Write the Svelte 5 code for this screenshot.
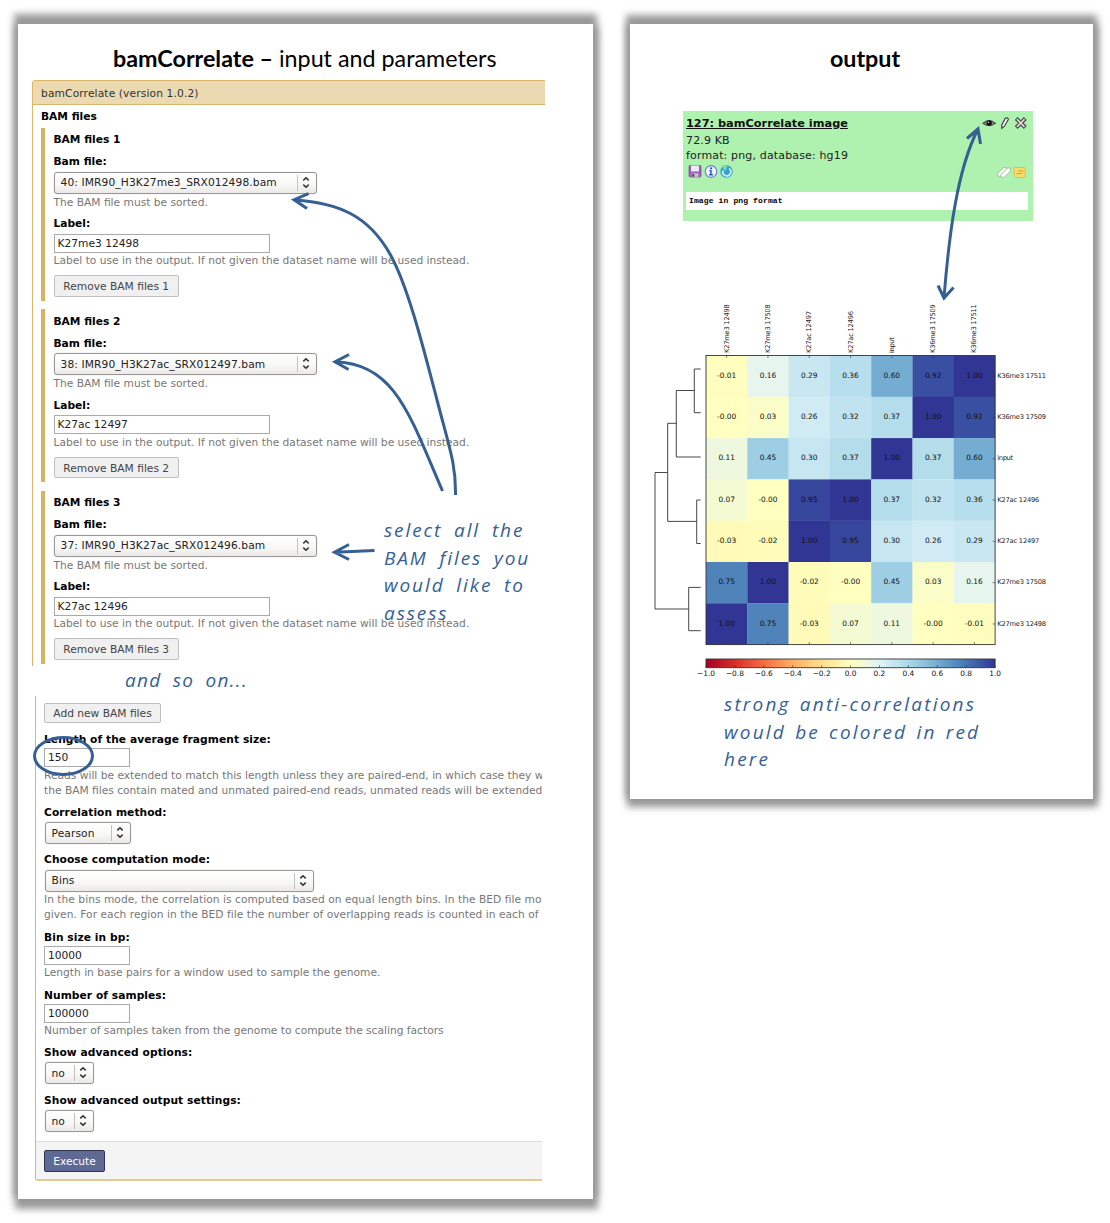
<script>
  const groups = [
    { n: 1, file: '40: IMR90_H3K27me3_SRX012498.bam', label: 'K27me3 12498' },
    { n: 2, file: '38: IMR90_H3K27ac_SRX012497.bam', label: 'K27ac 12497' },
    { n: 3, file: '37: IMR90_H3K27ac_SRX012496.bam', label: 'K27ac 12496' },
  ];

  const cols = ['K27me3 12498', 'K27me3 17508', 'K27ac 12497', 'K27ac 12496', 'input', 'K36me3 17509', 'K36me3 17511'];
  const rows = [...cols].reverse();
  const widths = { K27me3: 48.8, K36me3: 48.8, K27ac: 42, input: 15.8 };
  const labelWidth = (s) => widths[s.split(' ')[0]];
  const matrix = [
    ['-0.01', '0.16', '0.29', '0.36', '0.60', '0.92', '1.00'],
    ['-0.00', '0.03', '0.26', '0.32', '0.37', '1.00', '0.92'],
    ['0.11', '0.45', '0.30', '0.37', '1.00', '0.37', '0.60'],
    ['0.07', '-0.00', '0.95', '1.00', '0.37', '0.32', '0.36'],
    ['-0.03', '-0.02', '1.00', '0.95', '0.30', '0.26', '0.29'],
    ['0.75', '1.00', '-0.02', '-0.00', '0.45', '0.03', '0.16'],
    ['1.00', '0.75', '-0.03', '0.07', '0.11', '-0.00', '-0.01'],
  ];

  // Diverging red-yellow-blue scale over [-1, 1]
  const stops = ['a50026', 'd73027', 'f46d43', 'fdae61', 'fee090', 'ffffbf', 'e0f3f8', 'abd9e9', '74add1', '4575b4', '313695'];
  function colour(v) {
    const t = ((Number(v) + 1) / 2) * 10;
    const i = Math.min(9, Math.floor(t));
    const ch = (s, k) => parseInt(s.slice(k * 2, k * 2 + 2), 16);
    const c = [0, 1, 2].map((k) => Math.round(ch(stops[i], k) + (ch(stops[i + 1], k) - ch(stops[i], k)) * (t - i)));
    return `rgb(${c.join(',')})`;
  }

  const X0 = 706, Y0 = 355.5, C = 41.3;
  const ticks = ['−1.0', '−0.8', '−0.6', '−0.4', '−0.2', '0.0', '0.2', '0.4', '0.6', '0.8', '1.0'];
</script>

{#snippet select(value, size)}
  <div class="select {size}">
    <span>{value}</span>
    <svg width="20" height="20" viewBox="0 0 20 20">
      <path d="M1.5 2V18" stroke="#c4c2c0" fill="none" />
      <path d="M7.300 7.400L10 4.800L12.700 7.400M7.300 11.600L10 14.200L12.700 11.600" stroke="#333" stroke-width="1.5" fill="none" />
    </svg>
  </div>
{/snippet}

<main>
  <section class="sheet inputs">
    <h1><b>bamCorrelate –</b> <span>input and parameters</span></h1>

    <div class="tool top">
      <div class="bar"><span>bamCorrelate (version 1.0.2)</span></div>
      <div class="lbl files"><span>BAM files</span></div>
      {#each groups as g}
        <div class="group">
          <div class="lbl g-title">BAM files {g.n}</div>
          <div class="lbl g-file">Bam file:</div>
          {@render select(g.file, 'wide')}
          <p class="help">The BAM file must be sorted.</p>
          <div class="lbl g-label">Label:</div>
          <div class="field long">{g.label}</div>
          <p class="help">Label to use in the output. If not given the dataset name will be used instead.</p>
          <div class="btn">Remove BAM files {g.n}</div>
        </div>
      {/each}
    </div>

    <div class="hand so-on">and so on...</div>

    <div class="tool bottom">
      <div class="body">
        <div class="btn add">Add new BAM files</div>
        <div class="lbl l1">Length of the average fragment size:</div>
        <div class="field">150</div>
        <p class="help">Reads will be extended to match this length unless they are paired-end, in which case they w<br />the BAM files contain mated and unmated paired-end reads, unmated reads will be extended</p>
        <div class="lbl l2">Correlation method:</div>
        {@render select('Pearson', 'medium')}
        <div class="lbl l3">Choose computation mode:</div>
        {@render select('Bins', 'mode')}
        <p class="help wider">In the bins mode, the correlation is computed based on equal length bins. In the BED file mo<br />given. For each region in the BED file the number of overlapping reads is counted in each of</p>
        <div class="lbl l4">Bin size in bp:</div>
        <div class="field">10000</div>
        <p class="help tight">Length in base pairs for a window used to sample the genome.</p>
        <div class="lbl l5">Number of samples:</div>
        <div class="field">100000</div>
        <p class="help tight">Number of samples taken from the genome to compute the scaling factors</p>
        <div class="lbl l6">Show advanced options:</div>
        {@render select('no', 'small')}
        <div class="lbl l7">Show advanced output settings:</div>
        {@render select('no', 'small')}
      </div>
      <div class="footer"><div class="btn execute">Execute</div></div>
    </div>
  </section>

  <section class="sheet output">
    <h1><b>output</b></h1>

    <div class="dataset">
      <div class="head">
        <b>127: bamCorrelate image</b>
        <svg width="46" height="16" viewBox="0 0 46 16">
          <path d="M1 8.4Q7 2.6 13.4 8.4Q7 13 1 8.4Z" fill="#8a8a8a" stroke="#444" stroke-width="1.1" />
          <circle cx="7.2" cy="8" r="2.7" fill="#111" />
          <circle cx="6.5" cy="7.2" r=".8" fill="#ddd" />
          <path d="M19.800 13.200L19.700 10.200L23.200 3.500Q25.200 2 26.400 4.200L22.400 11.200Z" fill="#fff" stroke="#444" stroke-width="1.2" />
          <path d="M34.200 3.500L43.300 12.500M43.300 3.500L34.200 12.500" stroke="#444" stroke-width="4" />
          <path d="M34.900 4.200L42.600 11.800M42.600 4.200L34.900 11.800" stroke="#ddd" stroke-width="1.700" />
        </svg>
      </div>
      <div class="meta size">72.9 KB</div>
      <div class="meta fmt">format: png, database: hg19</div>
      <div class="actions">
        <svg width="50" height="16" viewBox="0 0 50 16">
          <rect x="3" y="1.500" width="12" height="11.500" rx="1" fill="#9560b2" stroke="#8455a0" stroke-width=".8" />
          <rect x="5" y="1.500" width="8" height="6" fill="#eee9f5" />
          <rect x="5.500" y="9.300" width="7" height="3.600" fill="#c8c2ce" />
          <rect x="6.200" y="10" width="2" height="2.800" fill="#59396c" />
          <circle cx="25" cy="7.500" r="5.800" fill="#eef2ff" stroke="#6a86d6" stroke-width="1.200" />
          <path d="M25 6.500V10.500M23.500 6.800H25.500M23.200 10.800H26.900" stroke="#2951b5" stroke-width="1.400" />
          <circle cx="25" cy="4.300" r="1.100" fill="#2951b5" />
          <circle cx="40.500" cy="7.500" r="6.200" fill="#329ed2" />
          <path d="M37 6.500A4 4 0 1 0 43 4.500" fill="none" stroke="#c9efff" stroke-width="1.800" />
          <path d="M35 1.500L41.500 1.500L39.500 7.500Z" fill="#77d8a0" />
        </svg>
        <svg width="32" height="16" viewBox="0 0 32 16">
          <path d="M1.500 12V9.500L7.500 3.500H10.500V6.500L4.500 12.500Z" fill="#f4faf4" stroke="#9cbc9c" stroke-width=".9" />
          <path d="M5 13V10.500L11.500 4H14.500V7L8 13.500Z" fill="#fff" stroke="#9cbc9c" stroke-width=".9" />
          <path d="M18 3.500H29V13.500H20.500L18 11Z" fill="#f8dc69" stroke="#dfbd45" stroke-width=".9" />
          <path d="M22 7H27.500M20.500 9.500H26" stroke="#cda636" />
        </svg>
      </div>
      <div class="peek">Image in png format</div>
    </div>

    <svg class="plot" width="430" height="400" viewBox="640 290 430 400">
      <defs>
        <linearGradient id="scale">
          {#each stops as s, i}<stop offset={i / 10} stop-color="#{s}" />{/each}
        </linearGradient>
      </defs>
      <path class="tree" d="M700.7 369H694.3V412.7H700.7M694.3 390.5H676.3V457H700.7M676.3 423.3H667.7V521.4H696.7M700.7 500H696.7V543.5H700.7M667.7 472.5H655V609H688.7M700.7 587.4H688.7V630.7H700.7" />
      {#each matrix as row, r}
        {#each row as v, c}
          <rect x={X0 + c * C} y={Y0 + r * C} width={C + 0.2} height={C + 0.2} fill={colour(v)} />
          <text class="val" x={X0 + (c + 0.5) * C} y={Y0 + (r + 0.5) * C + 1.6}>{v}</text>
        {/each}
      {/each}
      <rect class="frame" x={X0} y={Y0} width={C * 7} height={C * 7} />
      {#each cols as name, c}
        <path class="tick" d="M{X0 + (c + 0.5) * C} {Y0}v2.5m0 {C * 7 - 5}v2.5" />
        <text class="name" textLength={labelWidth(name)} transform="translate({X0 + (c + 0.5) * C + 2} 353) rotate(-90)">{name}</text>
      {/each}
      {#each rows as name, r}
        <path class="tick" d="M{X0 + 7 * C} {Y0 + (r + 0.5) * C}h-2.5" />
        <text class="name" textLength={labelWidth(name)} x="997.3" y={Y0 + (r + 0.5) * C + 1.7}>{name}</text>
      {/each}
      <rect x={X0} y="659" width={C * 7} height="8.7" fill="url(#scale)" />
      <rect class="frame" x={X0} y="659" width={C * 7} height="8.7" />
      {#each ticks as t, i}
        <path class="tick" d="M{X0 + i * 28.91} 667.7v-2.5" />
        <text class="val scale" x={X0 + i * 28.91} y="676">{t}</text>
      {/each}
    </svg>

    <div class="hand note">strong anti-correlations<br />would be colored in red<br />here</div>
  </section>

  <div class="hand callout">select all the<br />BAM files you<br />would like to<br />assess</div>
  <svg class="ink" width="1110" height="1223" viewBox="0 0 1110 1223">
    <path d="M295 200C338 203 368 215 390 254C408 286 424 350 437 400S456 465 455.500 495" />
    <path d="M308.500 193.700L294 199.800L307 208.500" />
    <path d="M335 362C395 363 410 416 442.500 491" />
    <path d="M349 354.500L335 361.800L348.500 369.500" />
    <path d="M374.500 550.500L335 552.300M349 544.500L334.500 552.300L349 559.500" />
    <ellipse cx="63.500" cy="756" rx="29" ry="18.500" />
    <path d="M978 129C957 170 949 235 944 298M967 138.500L978 129L980.500 144M938 285.500L944 298L953.500 287.500" />
  </svg>
</main>

<style>
  :global(body) { margin: 0; background: #fff; }
  main {
    position: relative;
    display: flex;
    align-items: flex-start;
    gap: 37px;
    width: 1110px;
    height: 1223px;
    box-sizing: border-box;
    padding: 24px 17px 24px 18px;
    overflow: hidden;
    font-family: 'DejaVu Sans', sans-serif;
    font-size: 10.67px;
    color: #333;
  }
  .sheet {
    display: flex;
    flex-direction: column;
    box-sizing: border-box;
    background: #fff;
  }
  .inputs {
    width: 575px;
    height: 1175px;
    padding-left: 14px;
    box-shadow: 0 -6px 7px 4px #999, 1px 6px 7px 4px #999;
  }
  .output {
    width: 463px;
    height: 775px;
    box-shadow: 0 -5px 7px 4px #999, 1px 4px 7px 4px #999;
  }
  h1 {
    margin: 0;
    height: 56px;
    padding-top: 19px;
    box-sizing: border-box;
    font: 400 23.300px/30px Lato, sans-serif;
    color: #000;
    white-space: nowrap;
  }
  .inputs h1 { padding-left: 81px; }
  .output h1 { height: 87px; padding-left: 7px; text-align: center; }

  .tool { border-left: 1px solid #dcb76b; overflow: hidden; }
  .top {
    width: 513px;
    height: 586px;
    box-sizing: border-box;
    border-top-left-radius: 3px;
  }
  .bar {
    height: 25px;
    box-sizing: border-box;
    padding-left: 8px;
    border: solid #dcb76b;
    border-width: 1px 0;
    background: #ebd9b2;
    line-height: 25px;
    letter-spacing: 0.130px;
  }
  .lbl { height: 16px; line-height: 16px; font-weight: 700; color: #000; white-space: nowrap; }
  .files { margin: 3.5px 0 3px 8px; }
  .group {
    height: 173px;
    box-sizing: border-box;
    margin: 0 0 8.5px 8px;
    padding: 4.500px 0 0 8.500px;
    border-left: 4px solid #d8b365;
  }
  .g-file { margin-top: 6px; }
  .g-label { margin-top: 6.5px; }
  .help { margin: 0.500px 0 0; line-height: 15px; color: #777; white-space: nowrap; }
  .wider { letter-spacing: 0.030px; }
  .tight { margin-top: 0; }
  .select {
    display: flex;
    justify-content: space-between;
    align-items: center;
    box-sizing: border-box;
    height: 22px;
    margin: 1.500px 0 1px 0.5px;
    padding-left: 6px;
    border: 1px solid #999693;
    border-radius: 3px;
    background: linear-gradient(#fff, #f7f7f6 60%, #eae9e8);
    box-shadow: 0 0 1px #aaa;
    letter-spacing: 0.110px;
    color: #222;
    white-space: nowrap;
  }
  .wide { width: 263px; }
  .wide span { margin-left: -0.500px; }
  .medium { width: 86px; }
  .mode { width: 269.500px; margin-bottom: 0; }
  .small { width: 49.500px; margin-top: 1px; }
  .field {
    box-sizing: border-box;
    width: 86px;
    height: 19px;
    margin-top: 1.500px;
    padding-left: 3px;
    border: 1px solid #aaa;
    background: #fff;
    line-height: 18px;
    color: #222;
  }
  .long { width: 216.500px; }
  .btn {
    box-sizing: border-box;
    width: 125.500px;
    height: 21.500px;
    margin-top: 7px;
    border: 1px solid #c0c0c0;
    border-radius: 2px;
    background: #f0f0f0;
    line-height: 21px;
    text-align: center;
    color: #444;
    white-space: nowrap;
  }
  .so-on { height: 30px; padding-left: 93px; line-height: 28px; }
  .bottom {
    width: 507px;
    height: 485px;
    margin-left: 3px;
    box-sizing: border-box;
    border-bottom: 2px solid #e5c98f;
    border-bottom-left-radius: 3px;
  }
  .body { height: 445px; padding: 6.500px 0 0 8px; box-sizing: border-box; }
  .body .lbl { letter-spacing: 0.070px; }
  .body .field { margin-top: 0.500px; }
  .add { width: 117px; height: 20.500px; margin: 0; line-height: 20px; }
  .l1 { margin-top: 8.500px; }
  .l2 { margin-top: 7px; }
  .l3 { margin-top: 8px; }
  .l4 { margin-top: 7.500px; }
  .l5 { margin-top: 7.500px; }
  .l6 { margin-top: 7px; }
  .l7 { margin-top: 9px; }
  .footer {
    height: 39px;
    box-sizing: border-box;
    padding: 8px 0 0 8px;
    border-top: 1px solid #ddd;
    background: #f4f4f4;
  }
  .execute { width: 61px; height: 22px; margin: 0; border-color: #30354d; background: #5e6994; color: #fff; }

  .hand {
    font-family: 'Open Sans', sans-serif;
    font-style: italic;
    font-size: 19px;
    color: #365f94;
    letter-spacing: 1.3px;
    word-spacing: 5px;
    white-space: nowrap;
  }
  .callout { position: absolute; left: 384px; top: 517px; line-height: 27.700px; letter-spacing: 1.900px; }
  .note { margin: 1px 0 0 94px; line-height: 27.500px; letter-spacing: 2.200px; word-spacing: 2px; }
  .ink { position: absolute; inset: 0; fill: none; stroke: #365f94; stroke-width: 3; pointer-events: none; }

  .dataset {
    box-sizing: border-box;
    width: 350px;
    height: 110px;
    margin-left: 53px;
    padding: 4px 5px 0 3px;
    background: #aff1af;
    color: #222;
  }
  .head { display: flex; justify-content: space-between; height: 17px; font-size: 11.300px; line-height: 18px; color: #111; }
  .head b { text-decoration: underline; }
  .meta { height: 15px; font-size: 11px; line-height: 17px; letter-spacing: 0.150px; }
  .actions { display: flex; justify-content: space-between; height: 30px; padding-top: 2px; box-sizing: border-box; }
  .peek {
    height: 18px;
    padding-left: 3px;
    background: #fff;
    font: 700 8px/18px 'Liberation Mono', monospace;
    letter-spacing: 0.130px;
    color: #000;
  }
  .plot { display: block; margin: 69px 0 0 10px; flex: none; }
  .tree, .frame, .tick { fill: none; stroke: #333; stroke-width: 0.9; }
  .tick { stroke-width: 0.6; }
  .val { font-size: 7.400px; text-anchor: middle; fill: #111; }
  .name { font-size: 6.700px; fill: #222; }
</style>
